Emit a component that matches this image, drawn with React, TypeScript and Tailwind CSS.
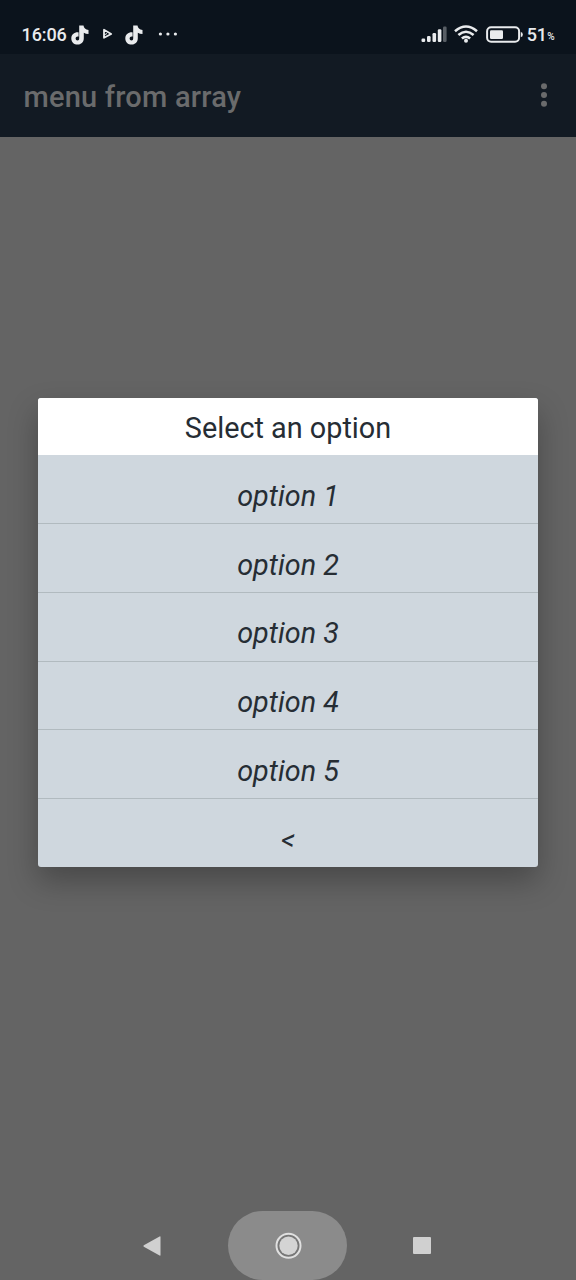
const options = ["option 1", "option 2", "option 3", "option 4", "option 5", "<"];

function TikTokIcon({ className }: { className: string }) {
  return (
    <svg viewBox="0 0 18 20" fill="currentColor" className={className}>
      <path d="M8.2.4H12.5Q13 4.2 17.5 4.9V9.1Q14.8 9 12.8 7.8V13.3C12.8 17.3 9.9 19.6 6.5 19.6C3.1 19.6.3 17 .3 13.4C.3 9.6 3.5 7 7.6 7.4V11.5C5.8 11.1 4.6 12 4.6 13.5C4.6 14.7 5.5 15.5 6.5 15.5C7.6 15.5 8.2 14.7 8.2 13.3Z" />
    </svg>
  );
}

function StatusBar() {
  return (
    <div className="flex h-[54px] bg-[#0b131c] text-[#e9ebed]">
      <div className="flex items-center pt-[15px] pl-[21.5px]">
        <span className="w-[49.5px] text-[18px] leading-5 font-medium tracking-[-0.1px]">16:06</span>
        <TikTokIcon className="h-5 w-[18px]" />
        <svg viewBox="0 0 11 12" fill="none" className="mb-px ml-[13px] h-3 w-[11px]">
          <path d="M2 1.8V9.8L9.2 6Z" stroke="currentColor" strokeWidth="1.8" strokeLinejoin="round" />
          <path d="M2 7 5 5.5" stroke="currentColor" strokeWidth="1" />
        </svg>
        <TikTokIcon className="ml-[11.5px] h-5 w-[18px]" />
        <svg viewBox="0 0 20 4" fill="currentColor" className="mb-px ml-[15px] h-1 w-5">
          <circle cx="2.4" cy="2" r="1.6" />
          <circle cx="9.9" cy="2" r="1.6" />
          <circle cx="17.4" cy="2" r="1.6" />
        </svg>
      </div>
      <div className="ml-auto flex items-center pt-[14px] pr-[21.5px]">
        <svg viewBox="0 0 26 18" fill="currentColor" className="h-[18px] w-[26px]">
          <rect x="0.5" y="13.5" width="3.7" height="3.5" rx="1.2" />
          <rect x="6" y="11" width="3.6" height="6" rx="1.2" />
          <rect x="11.5" y="8" width="3.6" height="9" rx="1.2" />
          <rect x="16.8" y="4.2" width="3.6" height="12.8" rx="1.2" />
          <rect x="22" y="1.5" width="3.6" height="15.5" rx="1.2" opacity="0.35" />
        </svg>
        <svg viewBox="0 0 24 18" fill="none" className="ml-[7px] h-[18px] w-6">
          <path
            d="M1 6.2Q12 -3.2 23 6.2M4.4 10Q12 3.5 19.6 10M7.9 13.6Q12 10 16.1 13.6"
            stroke="currentColor"
            strokeWidth="2.6"
          />
          <circle cx="12" cy="15.8" r="2" fill="currentColor" />
        </svg>
        <svg viewBox="0 0 37 17" fill="none" className="ml-2 h-[17px] w-[37px]">
          <rect x="1.1" y="1.2" width="32" height="14.6" rx="4" stroke="currentColor" strokeWidth="2" />
          <rect x="4" y="4.2" width="13" height="8.8" rx="1.2" fill="currentColor" />
          <path d="M34.8 6Q36.8 6 36.8 8.5Q36.8 11 34.8 11Z" fill="currentColor" />
        </svg>
        <span className="ml-[4px] w-[20.5px] pt-px text-[18px] leading-5 font-medium tracking-[-0.2px]">51</span>
        <span className="mt-[6px] text-[10px] leading-3 font-medium">%</span>
      </div>
    </div>
  );
}

function AppBar() {
  return (
    <div className="flex h-[82.5px] items-center justify-between bg-[#121a23] pr-[28.5px] pl-[23.5px] text-[#6a6b6c]">
      <h1 className="pt-[3px] text-[29px] leading-9 font-medium tracking-[0.21px]">menu from array</h1>
      <svg viewBox="0 0 8 26" fill="currentColor" className="h-[26px] w-2">
        <circle cx="4" cy="4.2" r="3" />
        <circle cx="4" cy="13" r="3" />
        <circle cx="4" cy="21.8" r="3" />
      </svg>
    </div>
  );
}

function Dialog() {
  return (
    <div className="mx-[38.4px] mt-[261.5px] h-[468.5px] overflow-hidden rounded-[3px] bg-[#cfd7de] text-center text-[#262d34] shadow-[0_14px_30px_rgba(0,0,0,0.28)]">
      <h2 className="h-[57.4px] bg-white pt-[12px] text-[28.8px] leading-9">Select an option</h2>
      <ul className="text-[28.8px] leading-9 italic">
        {options.map((option) => (
          <li key={option} className="h-[68.75px] border-b-[1.5px] border-[#b1babf] pt-[22.4px] last:border-0">
            {option}
          </li>
        ))}
      </ul>
    </div>
  );
}

function NavigationBar() {
  return (
    <div className="mt-auto grid h-[69px] grid-cols-[228px_119px_1fr] text-[#d0d0d0]">
      <div className="flex items-center justify-end pr-[67.5px]">
        <svg viewBox="0 0 18 20" fill="currentColor" className="h-5 w-[18px]">
          <path d="M0.8 9.3 16.6.4Q17.5 0 17.5 1V19Q17.5 20 16.6 19.6L.8 10.7Q0 10 .8 9.3Z" />
        </svg>
      </div>
      <div className="flex items-center justify-center rounded-full bg-[#8b8b8b]">
        <svg viewBox="0 0 28 28" className="h-7 w-7">
          <circle cx="14.5" cy="13.8" r="12" fill="#777777" stroke="#e0e0e0" strokeWidth="2" />
          <circle cx="14.5" cy="13.8" r="9.2" fill="#d4d4d4" />
        </svg>
      </div>
      <div className="flex items-center pl-[66px]">
        <div className="h-[17.5px] w-[18px] rounded-[1px] bg-current" />
      </div>
    </div>
  );
}

export default function App() {
  return (
    <main className="flex h-[1280px] w-[576px] flex-col overflow-hidden bg-[#646464] font-[Roboto,sans-serif]">
      <StatusBar />
      <AppBar />
      <Dialog />
      <NavigationBar />
    </main>
  );
}
